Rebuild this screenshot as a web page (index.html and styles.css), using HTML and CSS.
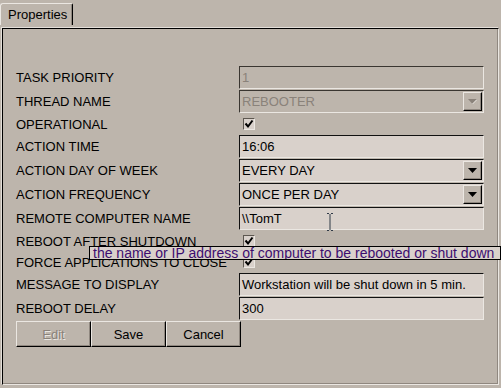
FILE: index.html
```html
<!DOCTYPE html>
<html lang="en">
<head>
    <meta charset="UTF-8">
    <meta name="viewport" content="width=device-width, initial-scale=1.0">
    <title>Properties</title>
    <link rel="stylesheet" href="styles.css">
</head>
<body>
    <div class="tab-bar">
        <div class="tab">Properties</div>
    </div>
    <div class="panel">
        <div class="row">
            <label>TASK PRIORITY</label>
            <div class="field disabled">1</div>
        </div>
        <div class="row">
            <label>THREAD NAME</label>
            <div class="field select disabled">
                <span>REBOOTER</span>
                <span class="drop">
                    <svg width="9" height="6" viewBox="0 0 9 6"><path d="M0 0H9L4.5 5Z" fill="#8a827a"/><path d="M4.5 5L9 0.5" stroke="#ebe7e2" stroke-width="1"/></svg>
                </span>
            </div>
        </div>
        <div class="row check">
            <label>OPERATIONAL</label>
            <div class="checkbox">
                <svg width="10" height="10" viewBox="0 0 10 10"><path d="M1.5 4.5L4 7.5L8.5 1.5" fill="none" stroke="#000" stroke-width="2"/></svg>
            </div>
        </div>
        <div class="row">
            <label>ACTION TIME</label>
            <div class="field">16:06</div>
        </div>
        <div class="row">
            <label>ACTION DAY OF WEEK</label>
            <div class="field select">
                <span>EVERY DAY</span>
                <span class="drop">
                    <svg width="9" height="6" viewBox="0 0 9 6"><path d="M0 0H9L4.5 5Z" fill="#000"/></svg>
                </span>
            </div>
        </div>
        <div class="row">
            <label>ACTION FREQUENCY</label>
            <div class="field select">
                <span>ONCE PER DAY</span>
                <span class="drop">
                    <svg width="9" height="6" viewBox="0 0 9 6"><path d="M0 0H9L4.5 5Z" fill="#000"/></svg>
                </span>
            </div>
        </div>
        <div class="row">
            <label>REMOTE COMPUTER NAME</label>
            <div class="field">\\TomT</div>
        </div>
        <div class="row check">
            <label>REBOOT AFTER SHUTDOWN</label>
            <div class="checkbox">
                <svg width="10" height="10" viewBox="0 0 10 10"><path d="M1.5 4.5L4 7.5L8.5 1.5" fill="none" stroke="#000" stroke-width="2"/></svg>
            </div>
        </div>
        <div class="row check">
            <label>FORCE APPLICATIONS TO CLOSE</label>
            <div class="checkbox">
                <svg width="10" height="10" viewBox="0 0 10 10"><path d="M1.5 4.5L4 7.5L8.5 1.5" fill="none" stroke="#000" stroke-width="2"/></svg>
            </div>
        </div>
        <div class="row">
            <label>MESSAGE TO DISPLAY</label>
            <div class="field">Workstation will be shut down in 5 min.</div>
        </div>
        <div class="row">
            <label>REBOOT DELAY</label>
            <div class="field">300</div>
        </div>
        <div class="buttons">
            <button class="btn" disabled>Edit</button>
            <button class="btn">Save</button>
            <button class="btn">Cancel</button>
        </div>
    </div>

    <svg class="ibeam" width="8" height="18" viewBox="0 0 8 18">
        <path d="M1 0.5H3M5 0.5H7M4 1V17M1 17.5H3M5 17.5H7" fill="none" stroke="#2f3a47" stroke-width="1"/>
    </svg>
    <div class="tooltip">the name or IP address of computer to be rebooted or shut down</div>
</body>
</html>
```

FILE: styles.css
```css
body {
    margin: 0;
    width: 501px;
    height: 388px;
    overflow: hidden;
    position: relative;
    background: #bdb5ac;
    font-family: "Liberation Sans", Arial, sans-serif;
    font-size: 13px;
    color: #000;
}
.tab-bar {
    box-sizing: border-box;
    height: 28px;
    padding-top: 3px;
}
.tab {
    box-sizing: border-box;
    width: 73px;
    height: 22px;
    padding-left: 7px;
    line-height: 21px;
    border-top: 1px solid #ebe7e2;
    border-left: 1px solid #ebe7e2;
    border-right: 1px solid #000;
    border-radius: 3px 2px 0 0;
    box-shadow: inset -1px 0 0 #8f877f;
}
.panel {
    box-sizing: border-box;
    margin-left: 2px;
    width: 497px;
    height: 357px;
    padding: 37px 0 0 13px;
    border: 1px solid;
    border-color: #000 #ebe7e2 #ebe7e2 #000;
    box-shadow: -1px -1px 0 #e4dfda, inset -1px -1px 0 #8f877f;
}
.row {
    display: flex;
    align-items: flex-start;
    height: 24px;
}
.row.check {
    height: 21px;
}
.row label {
    width: 223px;
    line-height: 23px;
}
.row.check label {
    line-height: 21px;
}
.field {
    box-sizing: border-box;
    display: flex;
    align-items: center;
    justify-content: space-between;
    width: 245px;
    height: 23px;
    padding-left: 2px;
    background: #d9d1cb;
    border: 1px solid;
    border-color: #111 #ebe7e2 #ebe7e2 #111;
    white-space: nowrap;
}
.field.disabled {
    background: #bdb5ac;
    color: #8a827a;
    border-color: #3a3631 #ebe7e2 #ebe7e2 #3a3631;
}
.field.select {
    padding-right: 1px;
}
.drop {
    box-sizing: border-box;
    display: flex;
    align-items: center;
    justify-content: center;
    width: 19px;
    height: 19px;
    background: #bdb5ac;
    border: 1px solid;
    border-color: #ebe7e2 #000 #000 #ebe7e2;
    box-shadow: inset -1px -1px 0 #8f877f;
}
.drop svg {
    margin-top: 1px;
}
.checkbox {
    box-sizing: border-box;
    display: flex;
    align-items: center;
    justify-content: center;
    width: 12px;
    height: 12px;
    margin: 4px 0 0 4px;
    background: #d9d1cb;
    border: 1px solid;
    border-color: #5d5750 #ebe7e2 #ebe7e2 #5d5750;
}
.buttons {
    display: flex;
}
.btn {
    box-sizing: border-box;
    width: 75px;
    height: 26px;
    padding: 0;
    background: #bdb5ac;
    font-family: inherit;
    font-size: 13px;
    color: #000;
    border: 1px solid;
    border-color: #ebe7e2 #000 #000 #ebe7e2;
    box-shadow: inset -1px -1px 0 #8f877f;
}
.btn:disabled {
    color: #8a827a;
    text-shadow: 1px 1px 0 #ebe7e2;
}
.ibeam {
    position: absolute;
    left: 326px;
    top: 213px;
}
.tooltip {
    position: absolute;
    box-sizing: border-box;
    left: 89px;
    top: 246px;
    width: 412px;
    height: 14px;
    padding-left: 3px;
    font-size: 14px;
    line-height: 12px;
    background: #d9d1cb;
    border: 1px solid #000;
    color: #3c0d6f;
    white-space: nowrap;
    overflow: hidden;
}
```
